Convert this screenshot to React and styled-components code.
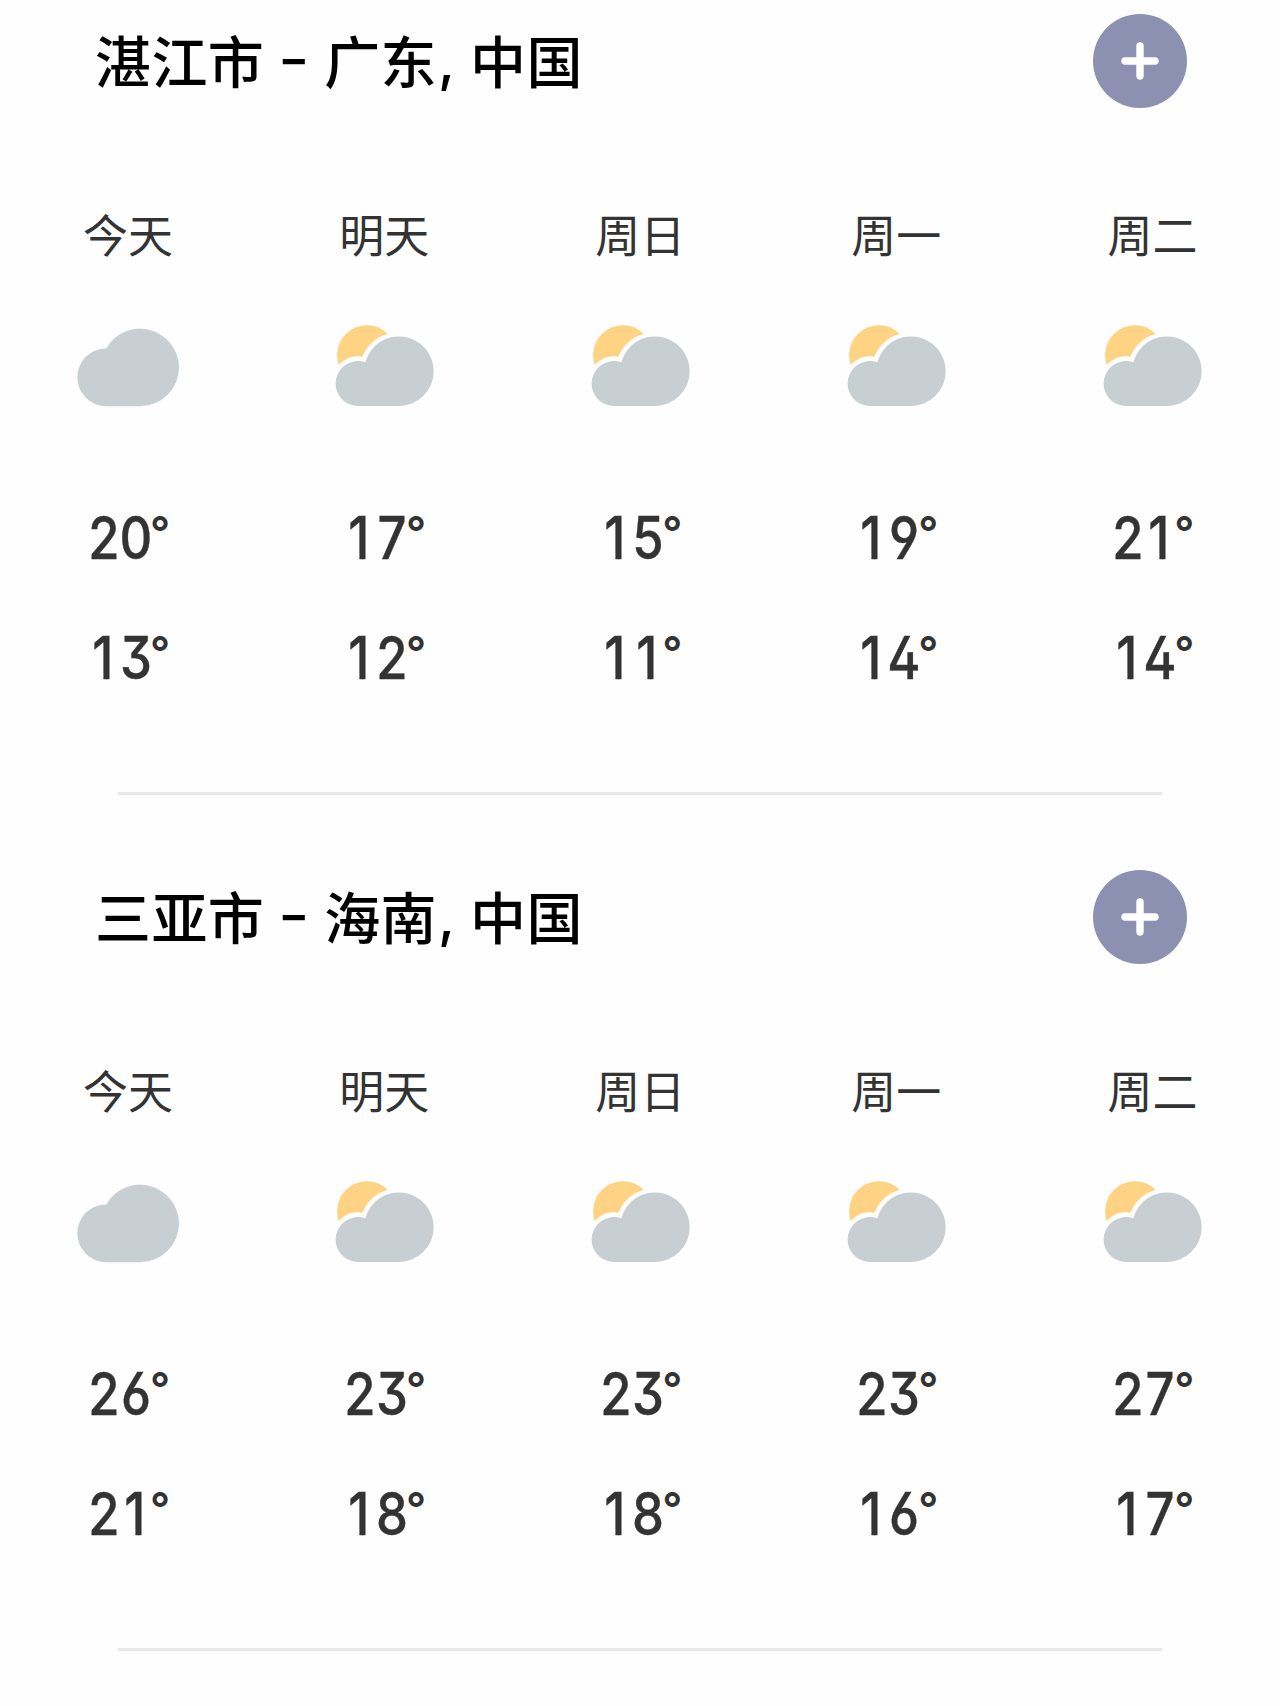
import React from "react";
import styled, { createGlobalStyle } from "styled-components";

const days = ["今天", "明天", "周日", "周一", "周二"];
const icons = ["cloudy", "partly", "partly", "partly", "partly"];

const cities = [
  {
    name: "湛江市",
    province: "广东",
    country: "中国",
    highs: [20, 17, 15, 19, 21],
    lows: [13, 12, 11, 14, 14],
  },
  {
    name: "三亚市",
    province: "海南",
    country: "中国",
    highs: [26, 23, 23, 23, 27],
    lows: [21, 18, 18, 16, 17],
  },
];

function CloudIcon() {
  return (
    <Icon viewBox="64 0 128 96">
      <path
        d="M106.2 86.2A28.9 28.9 0 0 1 77.3 57.3A28.9 28.9 0 0 1 106.3 28.4A38.9 38.9 0 0 1 179 47.3A38.9 38.9 0 0 1 140.1 86.2Z"
        fill="#c7cfd2"
      />
    </Icon>
  );
}

function PartlyIcon() {
  return (
    <Icon viewBox="64 0 128 96">
      <circle cx="111" cy="35.3" r="30" fill="#ffd384" />
      <path
        d="M102.1 86A22.5 22.5 0 0 1 79.6 63.5A22.5 22.5 0 0 1 109.3 42.2A34.8 34.8 0 0 1 177.7 51.2A34.8 34.8 0 0 1 142.9 86Z"
        fill="#c7cfd2"
        stroke="#fefefe"
        strokeWidth="9"
        paintOrder="stroke"
      />
    </Icon>
  );
}

function Temperature({ value }) {
  return (
    <Temp>
      {String(value)
        .split("")
        .map((digit, i) => (
          <Digit key={i} $narrow={digit === "1"}>
            {digit}
          </Digit>
        ))}
      <Degree>°</Degree>
    </Temp>
  );
}

function CityForecast({ city }) {
  return (
    <City>
      <Header>
        <Title>
          {city.name}
          <Dash>-</Dash>
          {city.province}
          <Comma>,</Comma>
          {city.country}
        </Title>
        <AddButton>
          <svg width="40" height="40" viewBox="0 0 40 40">
            <path d="M20 5v30M5 20h30" />
          </svg>
        </AddButton>
      </Header>
      <Forecast>
        {days.map((day, i) => (
          <Day key={day}>
            <DayName>{day}</DayName>
            {icons[i] === "cloudy" ? <CloudIcon /> : <PartlyIcon />}
            <Temperature value={city.highs[i]} />
            <Temperature value={city.lows[i]} />
          </Day>
        ))}
      </Forecast>
      <Divider />
    </City>
  );
}

function App() {
  return (
    <>
      <GlobalStyle />
      <Page>
        {cities.map((city) => (
          <CityForecast key={city.name} city={city} />
        ))}
      </Page>
    </>
  );
}

export default App;

const GlobalStyle = createGlobalStyle`
  * {
    box-sizing: border-box;
  }

  body {
    margin: 0;
    background: #fefefe;
    font-family: Inter, "Noto Sans CJK SC", sans-serif;
  }
`;

const Page = styled.main`
  width: 1280px;
  height: 1706px;
  overflow: hidden;
`;

const City = styled.section`
  height: 856px;
  padding-top: 14px;
`;

const Header = styled.header`
  display: flex;
  justify-content: space-between;
  height: 94px;
  padding: 0 93px 0 95px;
`;

const Title = styled.h2`
  margin: 0;
  font-family: "Noto Sans CJK SC", sans-serif;
  font-size: 56px;
  font-weight: 500;
  line-height: 90px;
  letter-spacing: 0.4px;
  color: #000000;
  white-space: nowrap;
`;

const Mark = styled.span`
  display: inline-block;
  font-family: Inter, sans-serif;
  font-feature-settings: "case";
  line-height: 1;
`;

const Dash = styled(Mark)`
  width: 60px;
  text-align: center;
  vertical-align: 1px;
  transform: scaleX(1.22);
`;

const Comma = styled(Mark)`
  width: 33px;
  padding-left: 1px;
  vertical-align: 2px;
`;

const AddButton = styled.button`
  display: flex;
  align-items: center;
  justify-content: center;
  width: 94px;
  height: 94px;
  padding: 0;
  border: 0;
  border-radius: 50%;
  background: #8d91b1;

  path {
    fill: none;
    stroke: #ffffff;
    stroke-width: 7.4;
    stroke-linecap: round;
  }
`;

const Forecast = styled.div`
  display: grid;
  grid-template-columns: repeat(5, 256.1px);
  height: 684px;
  padding-top: 98px;
`;

const Day = styled.div`
  display: flex;
  flex-direction: column;
  align-items: center;
`;

const DayName = styled.div`
  height: 114px;
  font-family: "Noto Sans CJK SC", sans-serif;
  font-size: 45px;
  line-height: 56px;
  color: #333333;
`;

const Icon = styled.svg`
  width: 128px;
  height: 96px;
  margin-bottom: 62px;
`;

const Temp = styled.div`
  display: flex;
  height: 120px;
  font-size: 59px;
  font-weight: 500;
  line-height: 119px;
  color: #333333;
  font-feature-settings: "cv09", "cv03", "cv04", "cv02";
`;

const Digit = styled.span`
  display: flex;
  justify-content: center;
  width: 32px;
  padding-right: ${(p) => (p.$narrow ? "3px" : "0")};
  -webkit-text-stroke: 0.4px #333333;
  transform: scaleX(0.86);
`;

const Degree = styled.span`
  display: flex;
  justify-content: center;
  width: 16px;
  font-size: 44px;
  font-weight: 600;
  line-height: 108px;
`;

const Divider = styled.hr`
  width: 1044px;
  height: 3px;
  margin: 0 auto;
  border: 0;
  background: #e8e8e8;
`;
